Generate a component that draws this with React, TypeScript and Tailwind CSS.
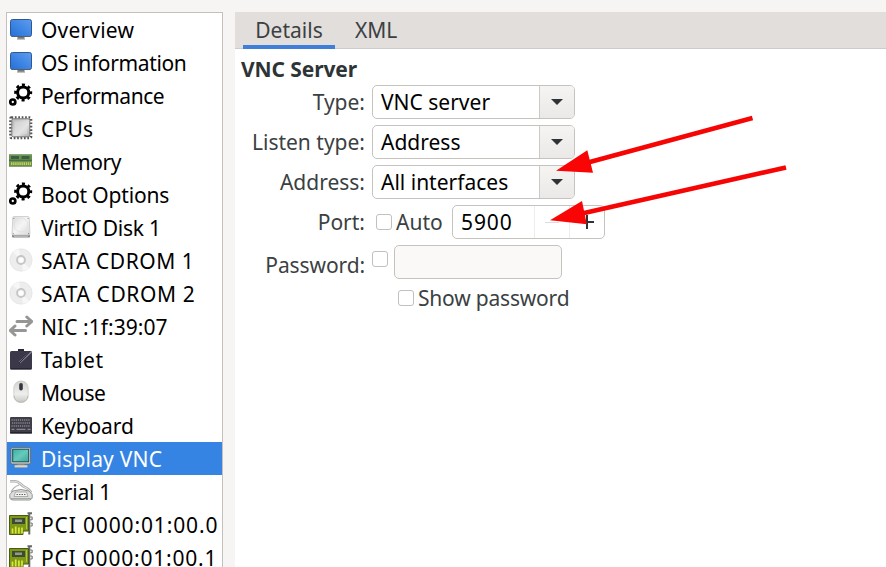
import type { ReactNode } from "react";

function Svg({ children }: { children: ReactNode }) {
  return (
    <svg width="24" height="24" viewBox="0 0 24 24" className="block shrink-0">
      {children}
    </svg>
  );
}

function MonitorIcon() {
  return (
    <Svg>
      <defs>
        <linearGradient id="mon" x1="0" y1="1" x2="1" y2="0">
          <stop offset="0" stopColor="#2470d8" />
          <stop offset="1" stopColor="#5c9df0" />
        </linearGradient>
      </defs>
      <path d="M8.5 19h7v3h-7z" fill="#777" />
      <path d="M8 21.5h8v1.2H8z" fill="#aaa" />
      <rect x="1.5" y="2.5" width="21" height="17" rx="2" fill="url(#mon)" stroke="#31588e" />
      <path d="M3 19.5h18" stroke="#555f70" />
    </Svg>
  );
}

function GearsIcon() {
  return (
    <Svg>
      <circle cx="14.2" cy="9.5" r="5.6" fill="none" stroke="#000" strokeWidth="3" />
      <circle cx="14.2" cy="9.5" r="7.6" fill="none" stroke="#000" strokeWidth="2.8" strokeDasharray="3 2.97" strokeDashoffset="1.5" />
      <circle cx="3.8" cy="19" r="2.5" fill="none" stroke="#000" strokeWidth="2.7" />
    </Svg>
  );
}

function CpuIcon() {
  return (
    <Svg>
      <defs>
        <linearGradient id="cpu" x1="0" y1="0" x2="1" y2="1">
          <stop offset="0" stopColor="#b4b4b4" />
          <stop offset=".6" stopColor="#e4e4e4" />
          <stop offset="1" stopColor="#aaa" />
        </linearGradient>
      </defs>
      <rect x="1.5" y="1.5" width="20.5" height="20.5" rx="1" fill="none" stroke="#555" strokeWidth="2.6" strokeDasharray="1.7 1.7" />
      <rect x="2.8" y="2.8" width="18" height="18" rx="1.500" fill="url(#cpu)" stroke="#777" />
      <rect x="5.5" y="5.5" width="12.5" height="12.5" fill="#e2e2e2" opacity=".5" />
    </Svg>
  );
}

function MemoryIcon() {
  return (
    <Svg>
      <rect x="0" y="5" width="23" height="13" fill="#66924b" />
      <rect x="0" y="5" width="23" height="1.2" fill="#87a97a" />
      <path d="M2 7h8v3H2zM12.5 7h8v3h-8z" fill="#405c47" />
      <path d="M0 11.3h23" stroke="#456848" strokeWidth="1.2" />
      <path d="M2 14.600h20" stroke="#c9ce58" strokeWidth="2.800" strokeDasharray="1.400 .7" />
      <path d="M0 17.5h23" stroke="#8aa072" />
    </Svg>
  );
}

function DiskIcon() {
  return (
    <Svg>
      <defs>
        <linearGradient id="hdd" x1="0" y1="0" x2="1" y2="1">
          <stop offset="0" stopColor="#dadada" />
          <stop offset=".5" stopColor="#f5f5f5" />
          <stop offset="1" stopColor="#d8d8d8" />
        </linearGradient>
      </defs>
      <path d="M3 19h18v2.5q0 1-1 1H4q-1 0-1-1z" fill="#888" />
      <path d="M5 1.500h14q1 0 1.2 1L21 19q0 1-1 1H4q-1 0-1-1L3.8 2.500Q4 1.500 5 1.500z" fill="url(#hdd)" stroke="#c9c9c9" strokeWidth=".8" />
      <circle cx="12" cy="10" r="7" fill="none" stroke="#dedede" strokeWidth=".8" />
      <path d="M5 21.3h14" stroke="#bbb" strokeWidth="1.2" />
      <path d="M4.3 3.500h1M18.6 3.500h1M3.8 18.6h1M19 18.6h1" stroke="#888" />
    </Svg>
  );
}

function DiscIcon() {
  return (
    <Svg>
      <circle cx="12" cy="12" r="11.2" fill="#ededed" stroke="#e0e0e0" strokeWidth=".6" />
      <path d="M12 12 4 4.3A11 11 0 0 1 10 1zM12 12l8 7.7a11 11 0 0 1-6 3.1z" fill="#f7f7f7" />
      <circle cx="12" cy="12" r="4" fill="#f4f4f4" stroke="#c6c6c6" strokeWidth="1.8" />
      <circle cx="12" cy="12" r="2.200" fill="#fff" />
    </Svg>
  );
}

function NicIcon() {
  return (
    <Svg>
      <g fill="none" stroke="#969694" strokeWidth="3" strokeLinecap="round" strokeLinejoin="round">
        <path d="M8 7.5h14M17.800 3l5 4.5-5 4.5" />
        <path d="M16.500 16.500H1.500M6 12l-4.800 4.500L6 21" />
      </g>
    </Svg>
  );
}

function TabletIcon() {
  return (
    <Svg>
      <path d="M9 2h6v3H9z" fill="#2b2936" />
      <rect x="1" y="4" width="22" height="18.500" rx="1.5" fill="#3b3849" />
      <path d="M1.5 21.800h21" stroke="#242130" strokeWidth="1.2" />
      <path d="M22.5 4.5 10.5 15.5" stroke="#807e8a" strokeWidth="2.2" />
      <path d="M21.5 4 10 16" stroke="#26232f" strokeWidth="1" />
    </Svg>
  );
}

function MouseIcon() {
  return (
    <Svg>
      <defs>
        <linearGradient id="mse" x1="0" y1="0" x2="0" y2="1">
          <stop offset="0" stopColor="#d4d3d0" />
          <stop offset=".6" stopColor="#eeeeec" />
          <stop offset="1" stopColor="#c9c7c3" />
        </linearGradient>
      </defs>
      <rect x="4.8" y="1" width="14.4" height="21.5" rx="6.8" fill="url(#mse)" stroke="#c6c5c2" strokeWidth=".7" />
      <path d="M5.2 16c.3 8 13.3 8 13.6 0" fill="none" stroke="#bbb9b5" />
      <rect x="10.2" y="3" width="3.600" height="7.6" rx="1.8" fill="#37363d" />
    </Svg>
  );
}

function KeyboardIcon() {
  return (
    <Svg>
      <rect x="1" y="4" width="22" height="16.500" rx="1.2" fill="#3f3d47" />
      <path d="M1 19.800h22" stroke="#24222c" strokeWidth="1.4" />
      <g stroke="#8a8793" strokeWidth="1.4" strokeDasharray="1.2 .9">
        <path d="M2.5 7h19M3 10h18.500M2.500 13h19" />
      </g>
      <path d="M2.500 16.300h3M7.500 16.300h9M18.500 16.300h3" stroke="#8a8793" strokeWidth="1.300" />
    </Svg>
  );
}

function DisplayIcon() {
  return (
    <Svg>
      <defs>
        <linearGradient id="scr" x1="0" y1="0" x2="1" y2="1">
          <stop offset="0" stopColor="#3bafa5" />
          <stop offset=".5" stopColor="#67c9bc" />
          <stop offset="1" stopColor="#3aa69a" />
        </linearGradient>
      </defs>
      <path d="M8.500 17h7v3h-7z" fill="#aaa" />
      <rect x="5.500" y="19" width="13" height="2.600" rx="1" fill="#d6d6d2" stroke="#999" strokeWidth=".6" />
      <rect x="2" y="1.500" width="19.500" height="16.500" rx="1.500" fill="#d4d4d0" stroke="#666" strokeWidth=".8" />
      <rect x="3.700" y="3.200" width="16" height="12.600" fill="url(#scr)" stroke="#174f59" />
    </Svg>
  );
}

function SerialIcon() {
  return (
    <Svg>
      <path d="M1 2.200h5c4 0 5 3 9 5.500 4 2 6 3 7 6" fill="none" stroke="#a4a6a4" strokeWidth="2.600" />
      <path d="M1 2.200h5c4 0 5 3 9 5.500 4 2 6 3 7 6" fill="none" stroke="#e4e5e4" strokeWidth="1.100" />
      <path d="M10 6C7 7 4 9 2 13" fill="none" stroke="#b0b0b0" strokeWidth="1.300" />
      <path d="M4 12q8-3 16 0l3.200 3.500v3.500q-1 2-3 2H4q-2.500 0-3.200-2v-3.500z" fill="#dcdedc" stroke="#8a8d8a" strokeWidth=".9" />
      <path d="M6.500 13h11l1.500 4.500H5z" fill="#f3f3f2" stroke="#9a9c9a" strokeWidth=".8" />
      <path d="M7.500 15.500h9" stroke="#666" strokeWidth="1.200" strokeDasharray="1.500 1" />
      <path d="M2 19.500h20" stroke="#a5a7a5" />
    </Svg>
  );
}

function PciIcon() {
  return (
    <Svg>
      <path d="M18.500 1.200h4.500M20.300 1v21.500" fill="none" stroke="#666865" strokeWidth="2" />
      <path d="M21.200 5h2v2.800h-2M21.200 11h2v3h-2" fill="#ddd" stroke="#777" />
      <path d="M.5 3.500h19v15.500h-5.500v3.500H.5z" fill="#7c9816" stroke="#465c10" />
      <rect x="3" y="6" width="13" height="6" fill="#3f4a35" />
      <rect x="6" y="7.500" width="7" height="2.500" fill="#93998a" />
      <path d="M3.500 21.500v-5M6.700 21.500v-7M9.900 21.500v-6M13 21.500v-6" stroke="#dce63b" strokeWidth="1.700" />
      <path d="M17.500 5v12" stroke="#b3c73c" />
    </Svg>
  );
}

const devices = [
  { name: "Overview", icon: <MonitorIcon />, fit: "tracking-[0.2px]" },
  { name: "OS information", icon: <MonitorIcon />, fit: "tracking-[-0.36px]" },
  { name: "Performance", icon: <GearsIcon />, fit: "tracking-[-0.45px]" },
  { name: "CPUs", icon: <CpuIcon />, fit: "tracking-[0.2px]" },
  { name: "Memory", icon: <MemoryIcon />, fit: "tracking-[-0.45px]" },
  { name: "Boot Options", icon: <GearsIcon />, fit: "tracking-[-0.17px]" },
  { name: "VirtIO Disk 1", icon: <DiskIcon />, fit: "tracking-[-0.22px]" },
  { name: "SATA CDROM 1", icon: <DiscIcon />, fit: "tracking-[0.5px]" },
  { name: "SATA CDROM 2", icon: <DiscIcon />, fit: "tracking-[0.6px]" },
  { name: "NIC :1f:39:07", icon: <NicIcon />, fit: "tracking-[0.05px]" },
  { name: "Tablet", icon: <TabletIcon />, fit: "tracking-[0.5px]" },
  { name: "Mouse", icon: <MouseIcon />, fit: "tracking-[-0.45px]" },
  { name: "Keyboard", icon: <KeyboardIcon />, fit: "tracking-[-0.13px]" },
  { name: "Display VNC", icon: <DisplayIcon />, fit: "tracking-[0.2px]" },
  { name: "Serial 1", icon: <SerialIcon />, fit: "tracking-[-0.25px]" },
  { name: "PCI 0000:01:00.0", icon: <PciIcon />, fit: "tracking-[0.86px]" },
  { name: "PCI 0000:01:00.1", icon: <PciIcon />, fit: "tracking-[0.8px]" },
];

function Row({ label, low = false, children }: { label: string; low?: boolean; children: ReactNode }) {
  return (
    <div className="flex h-[34px] items-center gap-[7px]">
      <div className={`w-[130px] shrink-0 text-right text-[#3b4042] ${low ? "pt-1.5 tracking-[-0.1px]" : ""}`}>{label}</div>
      {children}
    </div>
  );
}

function Combo({ value }: { value: string }) {
  return (
    <div className="flex h-[34px] w-[203px] overflow-hidden rounded-[5px] border border-[#c6c2be] bg-white">
      <div className="flex flex-1 items-center pl-2 text-black">{value}</div>
      <div className="flex w-[35px] items-center justify-center border-l border-[#cdc9c5] bg-linear-to-b from-[#f5f4f3] to-[#ebe9e8]">
        <svg width="12" height="6" viewBox="0 0 12 6">
          <path d="M0 0h12L6 6z" fill="#2e3436" />
        </svg>
      </div>
    </div>
  );
}

function Check() {
  return <span className="block size-4 shrink-0 rounded-[3px] border border-[#c3bfbb] bg-white" />;
}

export default function App() {
  return (
    <div className="relative flex h-[567px] w-[886px] overflow-hidden bg-[#f6f5f4] pl-1.5 pt-3 font-['Noto_Sans',sans-serif] text-[21px] leading-[33px] whitespace-nowrap">
      <aside className="h-[580px] w-[217px] shrink-0 border border-[#c4c0bc] bg-white">
        {devices.map((d) => {
          const selected = d.name === "Display VNC";
          return (
            <div
              key={d.name}
              className={`flex h-[33px] items-center gap-2 pl-0.5 pt-0.5 ${selected ? "bg-[#3584e4] text-white" : "text-black"}`}
            >
              <span className="-mt-1">{d.icon}</span>
              <span className={d.fit}>{d.name}</span>
            </div>
          );
        })}
      </aside>

      <main className="ml-3 flex-1 bg-white">
        <nav className="flex h-[37px] border-b border-[#cfcbc8] bg-[#e1dedb] pl-2 text-[#3b4042]">
          <div className="h-[37px] w-[92px] border-b-4 border-[#3f7fd9] pt-0.5 text-center">Details</div>
          <div className="pl-5 pt-0.5">XML</div>
        </nav>
        <h1 className="mt-1 pl-1.5 font-bold tracking-[-0.1px] text-[#2e3436]">VNC Server</h1>
        <div className="-mt-px flex flex-col gap-1.5">
          <Row label="Type:">
            <Combo value="VNC server" />
          </Row>
          <Row label="Listen type:">
            <Combo value="Address" />
          </Row>
          <Row label="Address:">
            <Combo value="All interfaces" />
          </Row>
          <Row label="Port:">
            <div className="flex items-center pl-1">
              <Check />
              <span className="w-[60px] pl-1 text-[#3b4042]">Auto</span>
              <div className="flex h-[34px] w-[153px] rounded-[5px] border border-[#c6c2be] bg-white">
                <div className="flex w-[81px] items-center pl-2 tracking-[0.9px] text-black">5900</div>
                <div className="flex w-[35px] items-center justify-center border-l border-[#efedec]">
                  <span className="h-px w-3.5 bg-[#dcdce4]" />
                </div>
                <div className="flex flex-1 items-center justify-center border-l border-[#efedec]">
                  <svg width="14" height="14" viewBox="0 0 14 14">
                    <path d="M7 0v14M0 7h14" stroke="#2e3436" strokeWidth="2" />
                  </svg>
                </div>
              </div>
            </div>
          </Row>
          <Row label="Password:" low>
            <div className="flex gap-1.5">
              <span className="mt-1.5">
                <Check />
              </span>
              <div className="h-[34px] w-[168px] rounded-[5px] border border-[#c6c2be] bg-[#faf9f8]" />
            </div>
          </Row>
        </div>
        <div className="mt-0.5 flex items-center gap-1 pl-[163px] text-[#3b4042]">
          <span className="-mt-px">
            <Check />
          </span>
          <span className="pt-px tracking-[-0.2px]">Show password</span>
        </div>
      </main>

      <svg className="pointer-events-none absolute left-0 top-0" width="886" height="567" viewBox="0 0 886 567">
        <g fill="#fa0505" stroke="none">
          <path d="M556 170.700 587.300 150.300 593 172.700z" />
          <path d="M550 220.300 582 201 586.800 224.200z" />
        </g>
        <path d="M588 162.500 752.500 118M582 213.500 786 167.500" stroke="#f60505" strokeWidth="4.700" />
      </svg>
    </div>
  );
}
